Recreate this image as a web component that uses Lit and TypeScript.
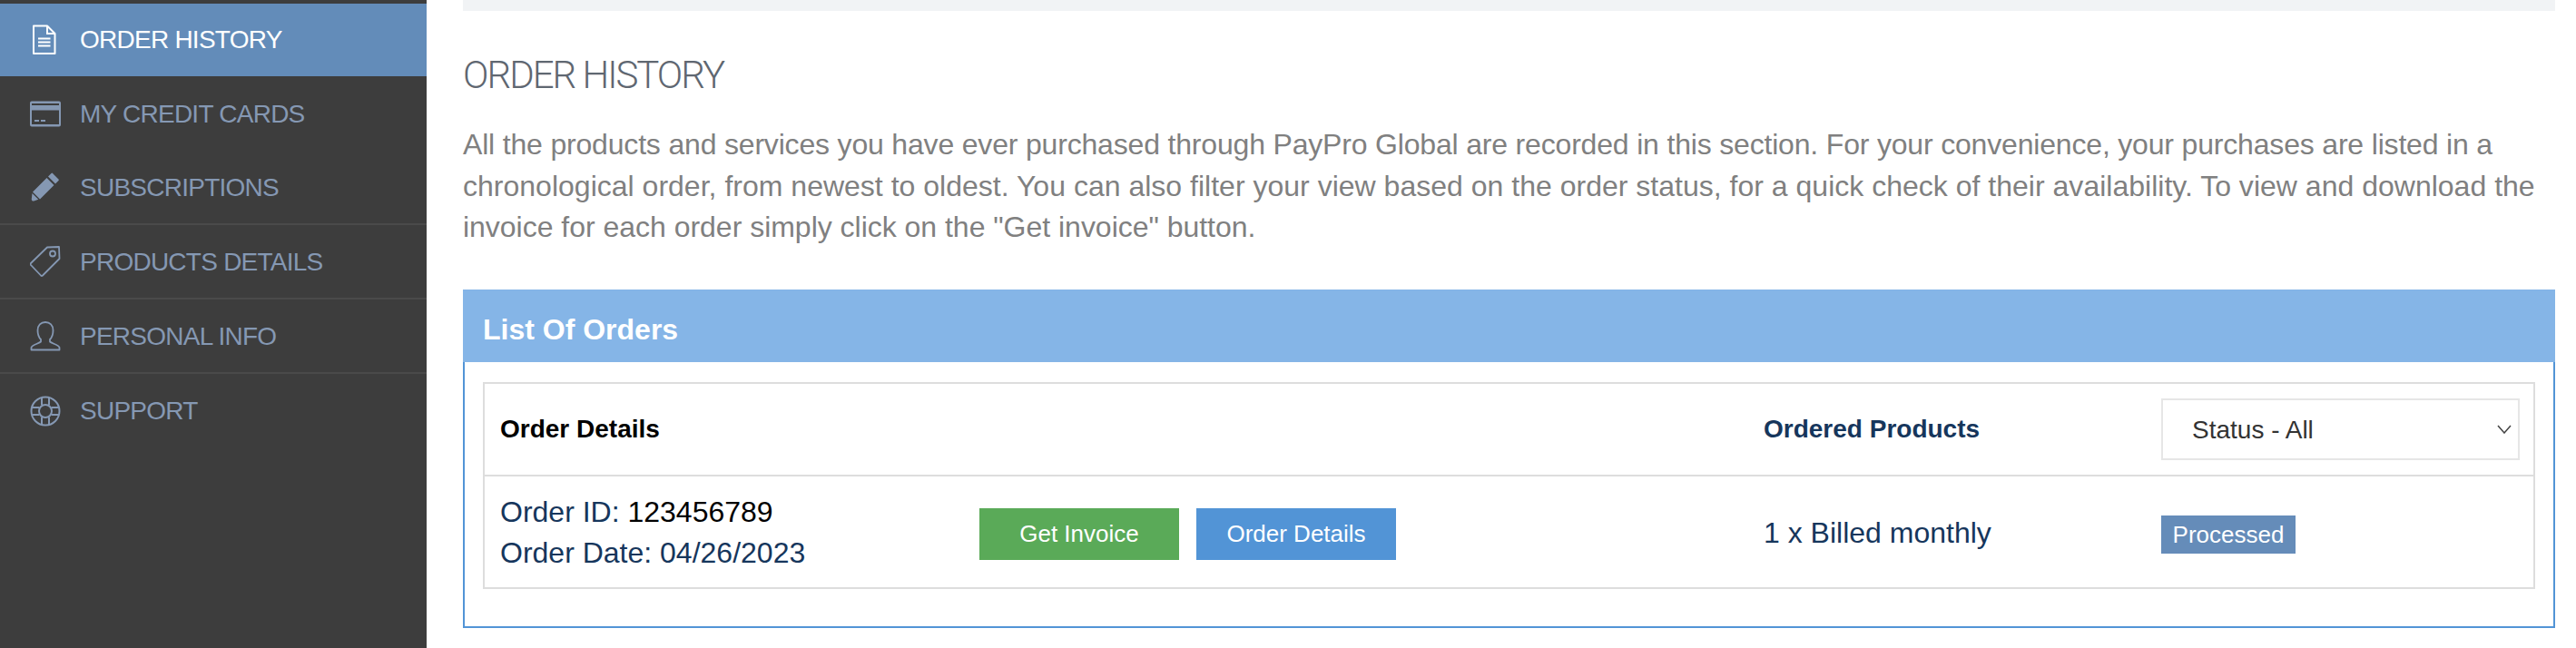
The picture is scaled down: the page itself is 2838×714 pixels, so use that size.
import { LitElement, html, css, svg } from "lit";
import { customElement } from "lit/decorators.js";

const icons = {
  doc: svg`<path d="M4 1.500h15l8.500 8.500v22h-23.500z" fill="none" stroke="currentColor" stroke-width="2" stroke-linejoin="round"/><path d="M19 1.500v8.500h8.500M9 15.500h13.500M9 19.500h13.500M9 23.500h13.500" fill="none" stroke="currentColor" stroke-width="2"/>`,
  card: svg`<path fill-rule="evenodd" fill="currentColor" d="M2 3.500h30a2 2 0 0 1 2 2v24a2 2 0 0 1-2 2h-30a2 2 0 0 1-2-2v-24a2 2 0 0 1 2-2zM2 6v2h30v-2zM2 13.500v15.500h30v-15.500zM5 24h5v2h-5zM12 24h5v2h-5z"/>`,
  pencil: svg`<path fill="currentColor" d="M25 2l6.500 6.500a1 1 0 0 1 0 1.500l-3.500 3.500-8-8 3.500-3.500a1 1 0 0 1 1.500 0zM18.500 7l8 8-15.500 15.500-8-8zM2.500 24l6.800 6.800-5 1.700a2 2 0 0 1-2.500-2.500z"/>`,
  tag: svg`<g fill="none" stroke="currentColor" stroke-width="1.800" stroke-linejoin="round"><path d="M19 1.500l13-.500.500 13-18.500 18.500a1.500 1.500 0 0 1-2 0l-11-11.500a1.500 1.500 0 0 1 0-2z"/><circle cx="25" cy="8.500" r="3"/></g>`,
  person: svg`<g fill="none" stroke="currentColor" stroke-width="1.800" stroke-linejoin="round"><path d="M12 21c-2.500-2.500-3.500-6-3.500-10c0-5.500 3.500-9 8.500-9s8.500 3.500 8.500 9c0 4-1 7.500-3.500 10v2.500c2 2 10 3.500 10.500 6.500v2.500h-31v-2.500c.5-3 8.500-4.500 10.500-6.500z"/></g>`,
  support: svg`<g fill="none" stroke="currentColor" stroke-width="2"><circle cx="17" cy="17" r="15.500"/><circle cx="17" cy="17" r="7"/><path d="M13 2v8.500M21 2v8.500M13 23.500v8.500M21 23.500v8.500M2 13h8.500M2 21h8.500M23.500 13h8.500M23.500 21h8.500"/></g>`,
};

const menu = [
  { label: "ORDER HISTORY", icon: icons.doc, active: true },
  { label: "MY CREDIT CARDS", icon: icons.card },
  { label: "SUBSCRIPTIONS", icon: icons.pencil },
  { label: "PRODUCTS DETAILS", icon: icons.tag },
  { label: "PERSONAL INFO", icon: icons.person },
  { label: "SUPPORT", icon: icons.support },
];

@customElement("app-root")
export class AppRoot extends LitElement {
  static styles = css`
    :host {
      display: flex;
      height: 714px;
      overflow: hidden;
      background: #fff;
      font-family: "Liberation Sans", Arial, sans-serif;
    }
    .sidebar {
      width: 470px;
      flex: none;
      background: #3d3d3d;
      padding-top: 4px;
      box-sizing: border-box;
    }
    .item {
      display: flex;
      align-items: center;
      gap: 21px;
      height: 82px;
      box-sizing: border-box;
      padding-left: 33px;
      border-bottom: 2px solid #4a4a4a;
      color: #8598b3;
      font-size: 28px;
      letter-spacing: -0.750px;
    }
    .item span {
      padding-top: 2px;
    }
    .item svg {
      width: 34px;
      height: 34px;
      flex: none;
    }
    .item.active {
      height: 80px;
      background: #638cb9;
      color: #fff;
      border-bottom: none;
    }
    .item.active span,
    .item.plain:last-child span {
      padding-top: 0;
    }
    .item.plain {
      border-bottom: none;
    }
    .main {
      width: 2305px;
      margin-left: 40px;
      flex: none;
    }
    .topbar {
      height: 12px;
      background: #f1f3f5;
    }
    h1 {
      margin: 50px 0 0;
      font-family: Roboto, "Liberation Sans", sans-serif;
      font-size: 42px;
      line-height: 42px;
      font-weight: 300;
      letter-spacing: -2px;
      color: #5f6771;
    }
    .intro {
      margin: 33px 0 0;
      font-size: 32px;
      line-height: 45.500px;
      color: #808080;
      white-space: nowrap;
    }
    .intro span {
      display: block;
    }
    .line1 {
      letter-spacing: -0.180px;
    }
    .line2 {
      letter-spacing: 0.010px;
    }
    .line3 {
      letter-spacing: -0.020px;
    }
    .panel {
      margin-top: 45.500px;
      height: 373px;
      box-sizing: border-box;
      border: 2px solid #5294d6;
      border-top: none;
    }
    .panel-head {
      height: 80px;
      margin: 0 -2px;
      padding: 8px 0 0 22px;
      box-sizing: border-box;
      display: flex;
      align-items: center;
      background: #85b5e7;
      color: #fff;
      font-size: 32px;
      font-weight: bold;
    }
    .table {
      margin: 22px 20px 0;
      border: 2px solid #dddddd;
    }
    .row {
      display: grid;
      grid-template-columns: 528px 864px 438px 395px;
      align-items: center;
      padding-left: 17px;
      color: #16365c;
      font-size: 32px;
    }
    .row.head {
      height: 100px;
      border-bottom: 2px solid #dddddd;
      font-size: 28px;
      font-weight: bold;
    }
    .row.body {
      height: 122px;
      box-sizing: border-box;
      padding-top: 5px;
    }
    .black {
      color: #000;
    }
    .details,
    .product {
      margin-bottom: 3px;
    }
    .details {
      line-height: 45.500px;
    }
    .actions {
      display: flex;
      gap: 19px;
    }
    .btn {
      width: 220px;
      height: 57px;
      display: flex;
      align-items: center;
      justify-content: center;
      color: #fff;
      font-size: 26px;
      background: #5294d6;
    }
    .btn.green {
      background: #5aaa58;
    }
    .badge {
      display: block;
      width: 148px;
      height: 42px;
      line-height: 42px;
      text-align: center;
      background: #658cb9;
      color: #fff;
      font-size: 26px;
    }
    .filter {
      position: relative;
      height: 68px;
    }
    select {
      appearance: none;
      width: 100%;
      height: 100%;
      box-sizing: border-box;
      border: 2px solid #e6e6e6;
      border-radius: 0;
      background: #fff;
      padding-left: 32px;
      color: #333;
      font-family: inherit;
      font-size: 28px;
    }
    .chevron {
      position: absolute;
      right: 9px;
      top: 29px;
      width: 16px;
      height: 10px;
      pointer-events: none;
    }
  `;

  render() {
    return html`
      <nav class="sidebar">
        ${menu.map(
          (m, i) => html`
            <div class="item ${m.active ? "active" : ""} ${i === 1 || i === 5 ? "plain" : ""}">
              <svg viewBox="0 0 34 34">${m.icon}</svg>
              <span>${m.label}</span>
            </div>
          `
        )}
      </nav>
      <main class="main">
        <div class="topbar"></div>
        <h1>ORDER HISTORY</h1>
        <p class="intro">
          <span class="line1">All the products and services you have ever purchased through PayPro Global are recorded in this section. For your convenience, your purchases are listed in a</span>
          <span class="line2">chronological order, from newest to oldest. You can also filter your view based on the order status, for a quick check of their availability. To view and download the</span>
          <span class="line3">invoice for each order simply click on the "Get invoice" button.</span>
        </p>
        <section class="panel">
          <div class="panel-head">List Of Orders</div>
          <div class="table">
            <div class="row head">
              <div class="black">Order Details</div>
              <div></div>
              <div>Ordered Products</div>
              <div class="filter">
                <select><option>Status - All</option></select>
                <svg class="chevron" viewBox="0 0 16 10"><path d="M1 1l7 8 7-8" fill="none" stroke="#444" stroke-width="1.500"/></svg>
              </div>
            </div>
            <div class="row body">
              <div class="details">
                <div>Order ID: <span class="black">123456789</span></div>
                <div>Order Date: 04/26/2023</div>
              </div>
              <div class="actions">
                <div class="btn green">Get Invoice</div>
                <div class="btn">Order Details</div>
              </div>
              <div class="product">1 x Billed monthly</div>
              <div><span class="badge">Processed</span></div>
            </div>
          </div>
        </section>
      </main>
    `;
  }
}
